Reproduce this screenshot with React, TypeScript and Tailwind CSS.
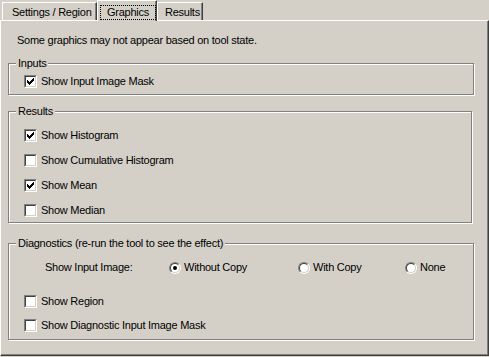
import * as React from 'react';

/* Classic Win2k property page: "Graphics" tab of a tool settings dialog */

function CheckBox({ checked }: { checked?: boolean }) {
  return (
    <span className="flex h-[13px] w-[13px] shrink-0 border border-t-[#808080] border-l-[#808080] border-b-white border-r-white">
      <span className="flex h-[11px] w-[11px] items-center justify-center border border-t-[#404040] border-l-[#404040] border-b-[#d4d0c8] border-r-[#d4d0c8] bg-white">
        {checked && (
          <svg width="7" height="7" viewBox="0 0 7 7" shapeRendering="crispEdges">
            <rect x="6" y="0" width="1" height="3" fill="#000" />
            <rect x="5" y="1" width="1" height="3" fill="#000" />
            <rect x="4" y="2" width="1" height="3" fill="#000" />
            <rect x="3" y="3" width="1" height="3" fill="#000" />
            <rect x="2" y="4" width="1" height="3" fill="#000" />
            <rect x="1" y="3" width="1" height="3" fill="#000" />
            <rect x="0" y="2" width="1" height="3" fill="#000" />
          </svg>
        )}
      </span>
    </span>
  );
}

function Radio({ checked }: { checked?: boolean }) {
  return (
    <span className="flex h-[12px] w-[12px] shrink-0 rounded-full border border-t-[#808080] border-l-[#808080] border-b-white border-r-white">
      <span className="flex h-[10px] w-[10px] items-center justify-center rounded-full border border-t-[#404040] border-l-[#404040] border-b-[#d4d0c8] border-r-[#d4d0c8] bg-white">
        {checked && <span className="h-[4px] w-[4px] rounded-full bg-black" />}
      </span>
    </span>
  );
}

function CheckRow({ label, checked }: { label: string; checked?: boolean }) {
  return (
    <div className="flex h-[13px] items-center gap-[4px]">
      <CheckBox checked={checked} />
      <span>{label}</span>
    </div>
  );
}

function Group({
  title,
  width,
  className,
  children,
}: {
  title: string;
  width: string;
  className?: string;
  children: React.ReactNode;
}) {
  return (
    <fieldset
      className={`${width} ${className ?? ''} border border-[#808080] p-0 shadow-[inset_1px_1px_0_#fff,1px_1px_0_#fff]`}
    >
      <legend className="relative ml-[7px] bg-[#d4d0c8] px-[2px] leading-[13px]">{title}</legend>
      {children}
    </fieldset>
  );
}

export default function App() {
  return (
    <div
      className="flex h-[357px] w-[489px] flex-col bg-[#d4d0c8] pb-[1px] text-[11px] leading-[13px] tracking-[-0.25px] text-black"
      style={{ fontFamily: '"Liberation Sans", Arial, sans-serif' }}
    >
      {/* ━━━━━ Tab strip ━━━━━ */}
      <div className="relative z-10 flex h-[20px] items-end pl-[2px]">
        <div className="flex h-[18px] w-[95px] items-center border-l border-t border-l-white border-t-white pl-[9px] pt-[1px] shadow-[inset_-1px_0_0_#808080] border-r border-r-[#404040]">
          Settings / Region
        </div>
        <div className="-mb-px flex h-[21px] w-[60px] items-start border-l border-t border-l-white border-t-white bg-[#d4d0c8] pt-[4px] pl-[2px] shadow-[inset_-1px_0_0_#808080] border-r border-r-[#404040]">
          <span className="border border-dotted border-black px-[6px]">Graphics</span>
        </div>
        <div className="flex h-[18px] w-[46px] items-center border-l border-t border-l-white border-t-white pl-[7px] pt-[1px] shadow-[inset_-1px_0_0_#808080] border-r border-r-[#404040]">
          Results
        </div>
      </div>

      {/* ━━━━━ Page ━━━━━ */}
      <div className="flex-1 border border-t-white border-l-white border-r-[#404040] border-b-[#404040] pl-[7px] pt-[13px] shadow-[inset_-1px_-1px_0_#808080]">
        <p className="pl-[9px]">Some graphics may not appear based on tool state.</p>

        <Group title="Inputs" width="w-[466px]" className="mt-[10px]">
          <div className="pb-[6px] pl-[15px] pt-[5px]">
            <CheckRow label="Show Input Image Mask" checked />
          </div>
        </Group>

        <Group title="Results" width="w-[464px]" className="mt-[10px]">
          <div className="flex flex-col gap-[12px] pb-[5px] pl-[15px] pt-[11px]">
            <CheckRow label="Show Histogram" checked />
            <CheckRow label="Show Cumulative Histogram" />
            <CheckRow label="Show Mean" checked />
            <CheckRow label="Show Median" />
          </div>
        </Group>

        <Group title="Diagnostics (re-run the tool to see the effect)" width="w-[466px]" className="mt-[14px]">
          <div className="pb-[7px] pl-[15px] pt-[11px]">
            <div className="grid h-[13px] grid-cols-[145px_129px_107px_1fr] items-center">
              <span className="pl-[21px]">Show Input Image:</span>
              <label className="flex items-center gap-[3px]">
                <Radio checked />
                <span>Without Copy</span>
              </label>
              <label className="flex items-center gap-[3px]">
                <Radio />
                <span>With Copy</span>
              </label>
              <label className="flex items-center gap-[3px]">
                <Radio />
                <span>None</span>
              </label>
            </div>
            <div className="mt-[21px] flex flex-col gap-[11px]">
              <CheckRow label="Show Region" />
              <CheckRow label="Show Diagnostic Input Image Mask" />
            </div>
          </div>
        </Group>
      </div>
    </div>
  );
}
